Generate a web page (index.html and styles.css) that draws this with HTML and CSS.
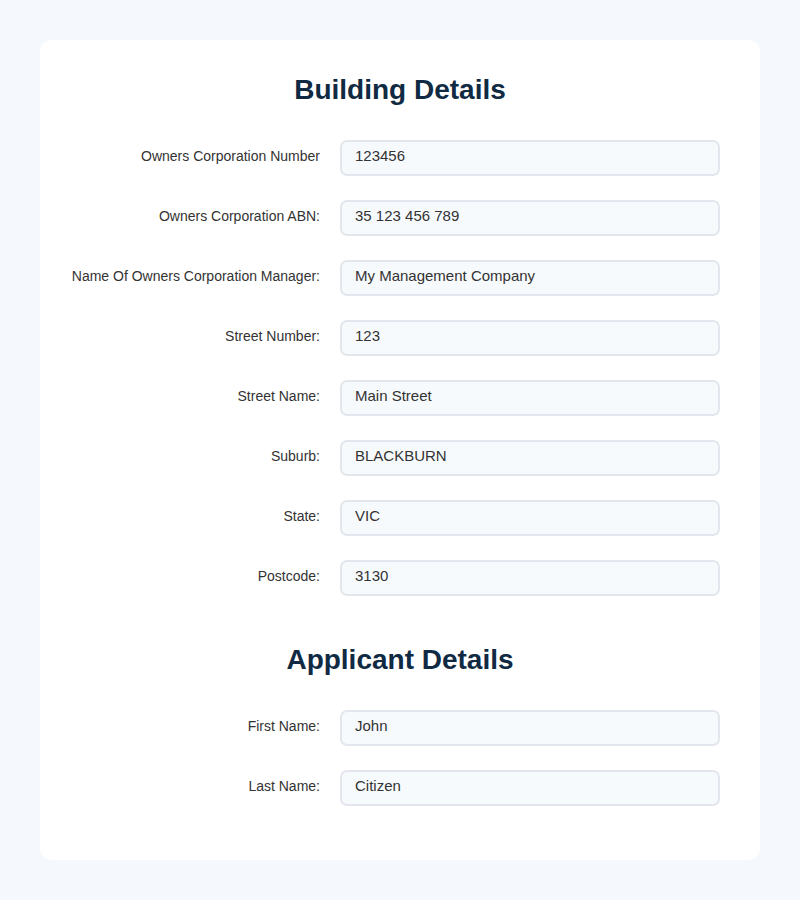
FILE: index.html
```html
<!doctype html>
<html lang="en">
<head>
  <meta charset="utf-8">
  <meta name="viewport" content="width=device-width,initial-scale=1">
  <title>Application Details</title>
  <link rel="stylesheet" href="styles.css">
</head>
<body>
  <div class="wrap">
    <form class="card">
      <section class="section">
        <h2 class="section-title">Building Details</h2>
        <div class="rows">
          <div class="row"><label class="label" for="oc-num">Owners Corporation Number</label><input class="field" id="oc-num" value="123456"></div>
          <div class="row"><label class="label" for="oc-abn">Owners Corporation ABN:</label><input class="field" id="oc-abn" value="35 123 456 789"></div>
          <div class="row"><label class="label" for="oc-mgr">Name Of Owners Corporation Manager:</label><input class="field" id="oc-mgr" value="My Management Company"></div>
          <div class="row"><label class="label" for="st-num">Street Number:</label><input class="field" id="st-num" value="123"></div>
          <div class="row"><label class="label" for="st-name">Street Name:</label><input class="field" id="st-name" value="Main Street"></div>
          <div class="row"><label class="label" for="suburb">Suburb:</label><input class="field" id="suburb" value="BLACKBURN"></div>
          <div class="row"><label class="label" for="state">State:</label><input class="field" id="state" value="VIC"></div>
          <div class="row"><label class="label" for="postcode">Postcode:</label><input class="field" id="postcode" value="3130"></div>
        </div>
      </section>

      <section class="section">
        <h2 class="section-title">Applicant Details</h2>
        <div class="rows">
          <div class="row"><label class="label" for="first">First Name:</label><input class="field" id="first" value="John"></div>
          <div class="row"><label class="label" for="last">Last Name:</label><input class="field" id="last" value="Citizen"></div>
        </div>
      </section>
    </form>
  </div>
</body>
</html>
```

FILE: styles.css
```css
:root{
  --bg:#f5f9fe;
  --card:#ffffff;
  --title:#102a43;
  --text:#333;
  --field-bg:#f7fafd;
  --field-border:#e3e7ed;
}
*{box-sizing:border-box}
html,body{margin:0;background:var(--bg);font-family:"Liberation Sans",Arial,sans-serif;color:var(--text)}
.wrap{padding:40px}
.card{background:var(--card);border-radius:12px;padding:33px 40px 54px;display:flex;flex-direction:column;gap:47px}

.section-title{margin:0 0 33px;text-align:center;font-size:28px;line-height:34px;font-weight:700;color:var(--title)}

.rows{display:flex;flex-direction:column;gap:24px}
.row{display:grid;grid-template-columns:minmax(0,1fr) 380px;column-gap:20px;align-items:center}
.label{display:flex;justify-content:flex-end;white-space:nowrap;font-size:14px;color:var(--text);margin-top:-5px}
.field{height:36px;width:100%;padding:0 13px 5px;border:2px solid var(--field-border);border-radius:7px;background:var(--field-bg);font-family:inherit;font-size:15px;color:var(--text);outline:none}
```
